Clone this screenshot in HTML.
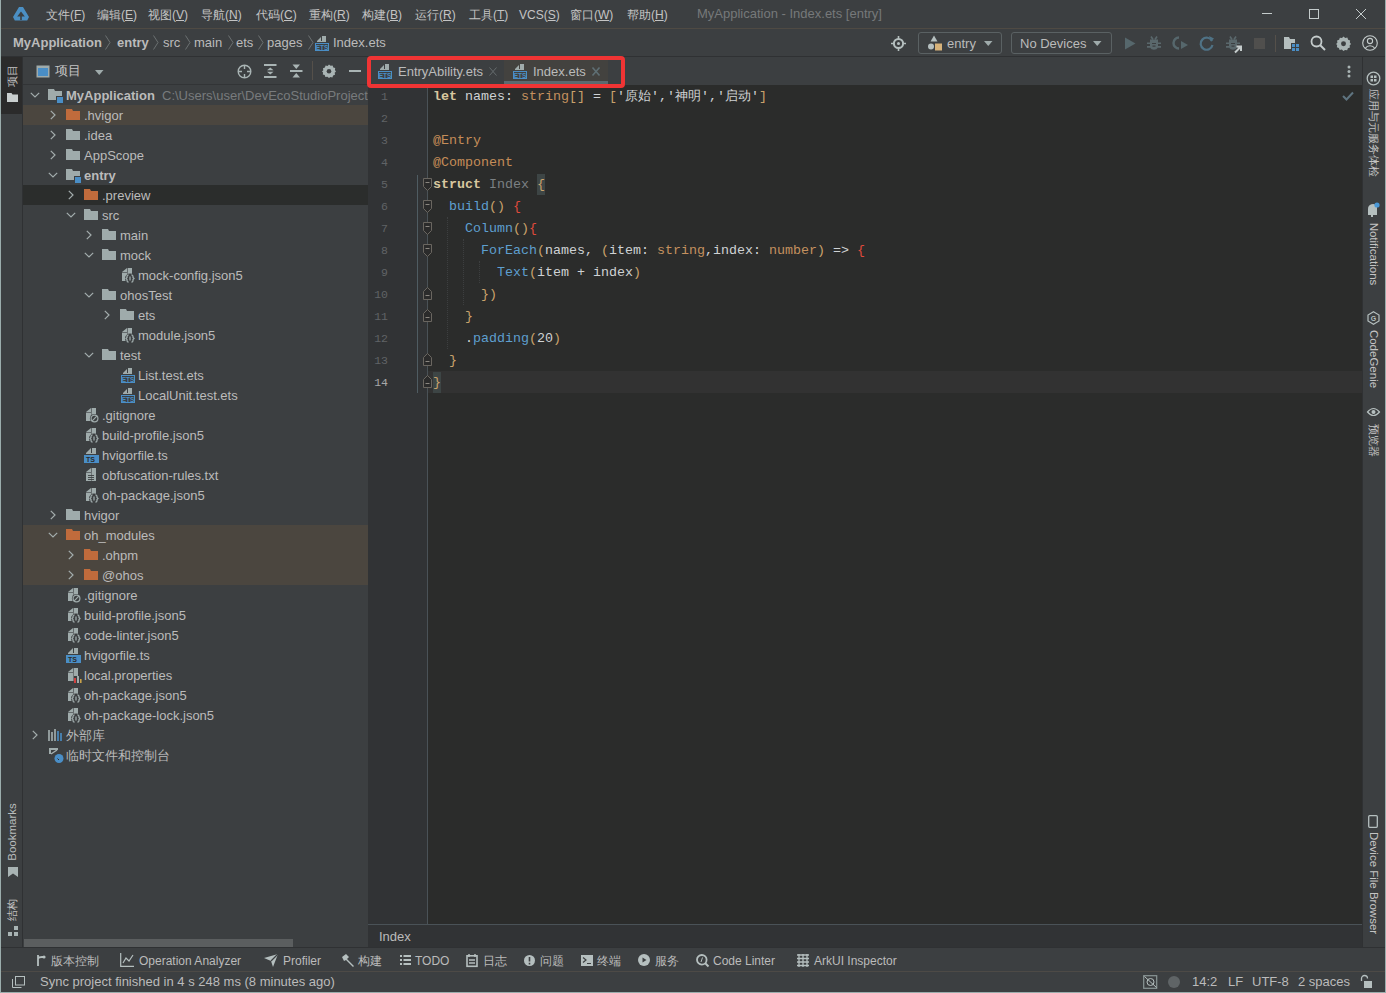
<!DOCTYPE html>
<html><head><meta charset="utf-8">
<style>
*{box-sizing:border-box;margin:0;padding:0}
html,body{width:1386px;height:993px;overflow:hidden;background:#3c3f41;font-family:"Liberation Sans",sans-serif;font-size:13px;color:#bbbbbb}
.a{position:absolute}
.t{position:absolute;white-space:nowrap;line-height:16px}
svg{position:absolute;overflow:visible}
#title{left:0;top:0;width:1386px;height:28px;background:#3c3f41}
#nav{left:0;top:29px;width:1386px;height:28px;background:#3c3f41}
.menu{top:7px;font-size:12px;color:#c4c4c4}
.bc{top:35px;color:#bbbbbb}
.chev{top:35px;width:6px;height:15px}
#lstrip{left:1px;top:57px;width:21px;height:891px;background:#3c3f41}
#proj{left:23px;top:57px;width:345px;height:891px;background:#3c3f41}
#editor{left:368px;top:85px;width:995px;height:839px;background:#2b2c2b}
#tabs{left:368px;top:57px;width:995px;height:28px;background:#3c3f41}
#rstrip{left:1363px;top:57px;width:22px;height:891px;background:#3c3f41}
#ebc{left:368px;top:924px;width:995px;height:24px;background:#313335}
#btool{left:0;top:948px;width:1386px;height:23px;background:#3c3f41}
#status{left:0;top:971px;width:1386px;height:22px;background:#3c3f41}
.row{position:absolute;left:23px;width:345px;height:20px}
.tr{top:2px}
.code{position:absolute;left:433px;margin-top:1px;font-family:"Liberation Mono",monospace;font-size:13.33px;line-height:22px;white-space:pre;color:#a9b7c6}
.ln{position:absolute;left:368px;width:20px;margin-top:1px;text-align:right;font-family:"Liberation Mono",monospace;font-size:11.5px;line-height:22px;color:#606366}
.code i{font-style:normal}
.code b{font-weight:bold}
.kw{color:#d8c79f}
.w{color:#cfd2d4}
.ty{color:#c4915f}
.br{color:#c9a26c}
.an{color:#c58d58}
.gy{color:#7b8083}
.fn{color:#5e9fcf}
.rd{color:#e04a3c}
.bt{top:953px;font-size:12px;color:#bbbbbb}
</style></head><body>
<svg width="0" height="0" style="position:absolute;left:0;top:0">
<defs>
<symbol id="chR" viewBox="0 0 6 10"><path d="M0.8 0.8L5 5L0.8 9.2" stroke="#a3adad" stroke-width="1.2" fill="none"/></symbol>
<symbol id="chD" viewBox="0 0 10 6"><path d="M0.8 0.8L5 5L9.2 0.8" stroke="#a3adad" stroke-width="1.2" fill="none"/></symbol>
<symbol id="i-folder" viewBox="0 0 16 16"><path d="M0 2h6l1 2h7v9H0z" fill="#9fabab"/></symbol>
<symbol id="i-folderO" viewBox="0 0 16 16"><path d="M0 2h6l1 2h7v9H0z" fill="#c06b3c"/></symbol>
<symbol id="i-module" viewBox="0 0 16 16"><path d="M0 2h6l1 2h7v5H8v4H0z" fill="#9fabab"/><rect x="9" y="10" width="6" height="6" fill="#4a8ec6"/></symbol>
<symbol id="i-paper" viewBox="0 0 16 16"><path d="M2 5L7 1V5Z" fill="#9fabab"/><rect x="7.6" y="1" width="4.4" height="13" fill="#9fabab"/><rect x="2" y="5.6" width="5.2" height="8.4" fill="#9fabab"/></symbol>
<symbol id="i-json" viewBox="0 0 16 16"><use href="#i-paper"/><circle cx="10" cy="11.5" r="5" fill="#3c3f41"/><path d="M8.6 7.8q-1.6 0.2-1.6 1.8v0.8l-1 1.1 1 1.1v0.8q0 1.6 1.6 1.8M11.4 7.8q1.6 0.2 1.6 1.8v0.8l1 1.1-1 1.1v0.8q0 1.6-1.6 1.8M10 9.5v4" stroke="#9fabab" stroke-width="1.3" fill="none"/></symbol>
<symbol id="i-git" viewBox="0 0 16 16"><use href="#i-paper"/><circle cx="10.5" cy="11.5" r="4.6" fill="#3c3f41"/><circle cx="10.5" cy="11.5" r="3.4" stroke="#9fabab" stroke-width="1.2" fill="none"/><path d="M8.2 13.8L12.8 9.2" stroke="#9fabab" stroke-width="1.2"/></symbol>
<symbol id="i-ets" viewBox="0 0 16 16"><path d="M3 6L7 2V6Z" fill="#9fabab"/><path d="M8 1h4v6H3v-1h5z" fill="#9fabab"/><rect x="1.5" y="8.5" width="13" height="7" fill="none" stroke="#4a8ec6" stroke-width="1"/><text x="8" y="14.6" font-family="Liberation Sans" font-size="6.5" font-weight="bold" fill="#4a8ec6" text-anchor="middle">ETS</text></symbol>
<symbol id="i-ts" viewBox="0 0 16 16"><path d="M2 6L7 1V6Z" fill="#9fabab"/><path d="M8 1h4v6H2v-1h6z" fill="#9fabab"/><rect x="0" y="8" width="15" height="8" fill="#4a8ec6"/><text x="2" y="14.8" font-family="Liberation Sans" font-size="7" font-weight="bold" fill="#2b2b2b">TS</text></symbol>
<symbol id="i-txt" viewBox="0 0 16 16"><use href="#i-paper"/><path d="M4 8.5h6M4 10.5h6M4 12.5h6" stroke="#3c3f41" stroke-width="0.9"/></symbol>
<symbol id="i-props" viewBox="0 0 16 16"><use href="#i-paper"/><rect x="8" y="9" width="8" height="7" fill="#3c3f41"/><rect x="8" y="11" width="2" height="5" fill="#d04040"/><rect x="11" y="9" width="2" height="7" fill="#9fabab"/><rect x="14" y="12" width="1.6" height="4" fill="#c9a14a"/></symbol>
<symbol id="i-lib" viewBox="0 0 16 16"><path d="M1 3v11M4 5v9M7 2v12" stroke="#a6b1b1" stroke-width="1.6"/><path d="M10 4v10M13 6v8" stroke="#4a8ec6" stroke-width="1.6"/></symbol>
<symbol id="i-scratch" viewBox="0 0 16 16"><path d="M1 1h9v2H3v4H1z" fill="#9fabab"/><path d="M3 7L9 3" stroke="#a6b1b1" stroke-width="1.3"/><circle cx="11" cy="11.5" r="4.5" fill="#4a8ec6"/><path d="M9.5 11.5l1.5 1.5" stroke="#2b2b2b" stroke-width="1"/></symbol>
<symbol id="foldO" viewBox="0 0 9 13"><path d="M0.5 0.5h8v8l-4 4l-4-4z" fill="#2b2b2b" stroke="#6a6660" stroke-width="1"/><path d="M2.5 4.5h4" stroke="#8a8680"/></symbol>
<symbol id="foldC" viewBox="0 0 9 13"><path d="M0.5 12.5h8v-8l-4-4l-4 4z" fill="#2b2b2b" stroke="#6a6660" stroke-width="1"/><path d="M2.5 8.5h4" stroke="#8a8680"/></symbol>
<symbol id="gear" viewBox="0 0 14 14"><path d="M7 0.5l1.6 1.3 2-0.3 0.7 1.9 1.9 0.7-0.3 2L14 7.5l-1.3 1.3 0.3 2-1.9 0.7-0.7 1.9-2-0.3L7 14l-1.6-1.3-2 0.3-0.7-1.9-1.9-0.7 0.3-2L0 7.5l1.3-1.3-0.3-2 1.9-0.7 0.7-1.9 2 0.3z" fill="#a9b4b4"/><circle cx="7" cy="7.2" r="2.3" fill="#3c3f41"/></symbol>
</defs></svg>

<!-- title bar -->
<div id="title" class="a"></div>
<div class="a" style="left:1px;top:28px;width:1384px;height:1px;background:#4f4a43"></div>
<svg style="left:12px;top:6px" width="18" height="16" viewBox="0 0 18 16"><path fill-rule="evenodd" d="M7 1H11L17 11L15.2 14.6H2.8L1 11Z M9 5.5L12.8 10.6H9.8V15H8.2V10.6H5.2Z" fill="#4b8fc3"/></svg>
<span class="t menu" style="left:46px">文件(<u>F</u>)</span>
<span class="t menu" style="left:97px">编辑(<u>E</u>)</span>
<span class="t menu" style="left:148px">视图(<u>V</u>)</span>
<span class="t menu" style="left:201px">导航(<u>N</u>)</span>
<span class="t menu" style="left:256px">代码(<u>C</u>)</span>
<span class="t menu" style="left:309px">重构(<u>R</u>)</span>
<span class="t menu" style="left:362px">构建(<u>B</u>)</span>
<span class="t menu" style="left:415px">运行(<u>R</u>)</span>
<span class="t menu" style="left:469px">工具(<u>T</u>)</span>
<span class="t menu" style="left:519px">VCS(<u>S</u>)</span>
<span class="t menu" style="left:570px">窗口(<u>W</u>)</span>
<span class="t menu" style="left:627px">帮助(<u>H</u>)</span>
<span class="t" style="left:697px;top:6px;color:#76797a">MyApplication - Index.ets [entry]</span>
<div class="a" style="left:1262px;top:13px;width:10px;height:1px;background:#c5cccc"></div>
<div class="a" style="left:1309px;top:9px;width:10px;height:10px;border:1px solid #c5cccc"></div>
<svg style="left:1356px;top:9px" width="10" height="10"><path d="M0 0L10 10M10 0L0 10" stroke="#c5cccc" stroke-width="1"/></svg>

<!-- nav bar -->
<div id="nav" class="a"></div>
<div class="a" style="left:1px;top:56px;width:1384px;height:1px;background:#2f3133"></div>
<span class="t bc" style="left:13px;font-weight:bold">MyApplication</span>
<svg style="left:105px;top:35px" width="6" height="15"><path d="M0.5 0.5L5 7.5L0.5 14.5" stroke="#6b7071" fill="none"/></svg>
<span class="t bc" style="left:117px;font-weight:bold">entry</span>
<svg style="left:153px;top:35px" width="6" height="15"><path d="M0.5 0.5L5 7.5L0.5 14.5" stroke="#6b7071" fill="none"/></svg>
<span class="t bc" style="left:163px">src</span>
<svg style="left:185px;top:35px" width="6" height="15"><path d="M0.5 0.5L5 7.5L0.5 14.5" stroke="#6b7071" fill="none"/></svg>
<span class="t bc" style="left:194px">main</span>
<svg style="left:228px;top:35px" width="6" height="15"><path d="M0.5 0.5L5 7.5L0.5 14.5" stroke="#6b7071" fill="none"/></svg>
<span class="t bc" style="left:236px">ets</span>
<svg style="left:258px;top:35px" width="6" height="15"><path d="M0.5 0.5L5 7.5L0.5 14.5" stroke="#6b7071" fill="none"/></svg>
<span class="t bc" style="left:267px">pages</span>
<svg style="left:308px;top:35px" width="6" height="15"><path d="M0.5 0.5L5 7.5L0.5 14.5" stroke="#6b7071" fill="none"/></svg>
<span class="t bc" style="left:333px">Index.ets</span>

<!-- left strip -->
<div id="lstrip" class="a"></div>
<div class="a" style="left:1px;top:57px;width:21px;height:57px;background:#2b2b2b"></div>
<div class="a" style="left:22px;top:57px;width:1px;height:891px;background:#2f3133"></div>

<!-- project panel -->
<div id="proj" class="a"></div>
<div class="a" style="left:23px;top:84px;width:345px;height:1px;background:#323436"></div>
<!--TREE-->
<div class="a" style="left:23px;top:105px;width:345px;height:20px;background:#4b463f"></div>
<div class="a" style="left:23px;top:185px;width:345px;height:20px;background:#2b2d2c"></div>
<div class="a" style="left:23px;top:525px;width:345px;height:20px;background:#4b463f"></div>
<div class="a" style="left:23px;top:545px;width:345px;height:20px;background:#4b463f"></div>
<div class="a" style="left:23px;top:565px;width:345px;height:20px;background:#4b463f"></div>
<svg class="chD" style="left:30px;top:92px" width="10" height="6"><use href="#chD"/></svg>
<svg style="left:48px;top:87px" width="16" height="16"><use href="#i-module"/></svg>
<span class="t" style="left:66px;top:88px;font-weight:bold;">MyApplication</span>
<span class="t" style="left:162px;top:88px;color:#787b7d;width:206px;overflow:hidden">C:\Users\user\DevEcoStudioProjects\MyApplication</span>
<svg class="chR" style="left:50px;top:110px" width="6" height="10"><use href="#chR"/></svg>
<svg style="left:66px;top:107px" width="16" height="16"><use href="#i-folderO"/></svg>
<span class="t" style="left:84px;top:108px;">.hvigor</span>
<svg class="chR" style="left:50px;top:130px" width="6" height="10"><use href="#chR"/></svg>
<svg style="left:66px;top:127px" width="16" height="16"><use href="#i-folder"/></svg>
<span class="t" style="left:84px;top:128px;">.idea</span>
<svg class="chR" style="left:50px;top:150px" width="6" height="10"><use href="#chR"/></svg>
<svg style="left:66px;top:147px" width="16" height="16"><use href="#i-folder"/></svg>
<span class="t" style="left:84px;top:148px;">AppScope</span>
<svg class="chD" style="left:48px;top:172px" width="10" height="6"><use href="#chD"/></svg>
<svg style="left:66px;top:167px" width="16" height="16"><use href="#i-module"/></svg>
<span class="t" style="left:84px;top:168px;font-weight:bold;">entry</span>
<svg class="chR" style="left:68px;top:190px" width="6" height="10"><use href="#chR"/></svg>
<svg style="left:84px;top:187px" width="16" height="16"><use href="#i-folderO"/></svg>
<span class="t" style="left:102px;top:188px;">.preview</span>
<svg class="chD" style="left:66px;top:212px" width="10" height="6"><use href="#chD"/></svg>
<svg style="left:84px;top:207px" width="16" height="16"><use href="#i-folder"/></svg>
<span class="t" style="left:102px;top:208px;">src</span>
<svg class="chR" style="left:86px;top:230px" width="6" height="10"><use href="#chR"/></svg>
<svg style="left:102px;top:227px" width="16" height="16"><use href="#i-folder"/></svg>
<span class="t" style="left:120px;top:228px;">main</span>
<svg class="chD" style="left:84px;top:252px" width="10" height="6"><use href="#chD"/></svg>
<svg style="left:102px;top:247px" width="16" height="16"><use href="#i-folder"/></svg>
<span class="t" style="left:120px;top:248px;">mock</span>
<svg style="left:120px;top:267px" width="16" height="16"><use href="#i-json"/></svg>
<span class="t" style="left:138px;top:268px;">mock-config.json5</span>
<svg class="chD" style="left:84px;top:292px" width="10" height="6"><use href="#chD"/></svg>
<svg style="left:102px;top:287px" width="16" height="16"><use href="#i-folder"/></svg>
<span class="t" style="left:120px;top:288px;">ohosTest</span>
<svg class="chR" style="left:104px;top:310px" width="6" height="10"><use href="#chR"/></svg>
<svg style="left:120px;top:307px" width="16" height="16"><use href="#i-folder"/></svg>
<span class="t" style="left:138px;top:308px;">ets</span>
<svg style="left:120px;top:327px" width="16" height="16"><use href="#i-json"/></svg>
<span class="t" style="left:138px;top:328px;">module.json5</span>
<svg class="chD" style="left:84px;top:352px" width="10" height="6"><use href="#chD"/></svg>
<svg style="left:102px;top:347px" width="16" height="16"><use href="#i-folder"/></svg>
<span class="t" style="left:120px;top:348px;">test</span>
<svg style="left:120px;top:367px" width="16" height="16"><use href="#i-ets"/></svg>
<span class="t" style="left:138px;top:368px;">List.test.ets</span>
<svg style="left:120px;top:387px" width="16" height="16"><use href="#i-ets"/></svg>
<span class="t" style="left:138px;top:388px;">LocalUnit.test.ets</span>
<svg style="left:84px;top:407px" width="16" height="16"><use href="#i-git"/></svg>
<span class="t" style="left:102px;top:408px;">.gitignore</span>
<svg style="left:84px;top:427px" width="16" height="16"><use href="#i-json"/></svg>
<span class="t" style="left:102px;top:428px;">build-profile.json5</span>
<svg style="left:84px;top:447px" width="16" height="16"><use href="#i-ts"/></svg>
<span class="t" style="left:102px;top:448px;">hvigorfile.ts</span>
<svg style="left:84px;top:467px" width="16" height="16"><use href="#i-txt"/></svg>
<span class="t" style="left:102px;top:468px;">obfuscation-rules.txt</span>
<svg style="left:84px;top:487px" width="16" height="16"><use href="#i-json"/></svg>
<span class="t" style="left:102px;top:488px;">oh-package.json5</span>
<svg class="chR" style="left:50px;top:510px" width="6" height="10"><use href="#chR"/></svg>
<svg style="left:66px;top:507px" width="16" height="16"><use href="#i-folder"/></svg>
<span class="t" style="left:84px;top:508px;">hvigor</span>
<svg class="chD" style="left:48px;top:532px" width="10" height="6"><use href="#chD"/></svg>
<svg style="left:66px;top:527px" width="16" height="16"><use href="#i-folderO"/></svg>
<span class="t" style="left:84px;top:528px;">oh_modules</span>
<svg class="chR" style="left:68px;top:550px" width="6" height="10"><use href="#chR"/></svg>
<svg style="left:84px;top:547px" width="16" height="16"><use href="#i-folderO"/></svg>
<span class="t" style="left:102px;top:548px;">.ohpm</span>
<svg class="chR" style="left:68px;top:570px" width="6" height="10"><use href="#chR"/></svg>
<svg style="left:84px;top:567px" width="16" height="16"><use href="#i-folderO"/></svg>
<span class="t" style="left:102px;top:568px;">@ohos</span>
<svg style="left:66px;top:587px" width="16" height="16"><use href="#i-git"/></svg>
<span class="t" style="left:84px;top:588px;">.gitignore</span>
<svg style="left:66px;top:607px" width="16" height="16"><use href="#i-json"/></svg>
<span class="t" style="left:84px;top:608px;">build-profile.json5</span>
<svg style="left:66px;top:627px" width="16" height="16"><use href="#i-json"/></svg>
<span class="t" style="left:84px;top:628px;">code-linter.json5</span>
<svg style="left:66px;top:647px" width="16" height="16"><use href="#i-ts"/></svg>
<span class="t" style="left:84px;top:648px;">hvigorfile.ts</span>
<svg style="left:66px;top:667px" width="16" height="16"><use href="#i-props"/></svg>
<span class="t" style="left:84px;top:668px;">local.properties</span>
<svg style="left:66px;top:687px" width="16" height="16"><use href="#i-json"/></svg>
<span class="t" style="left:84px;top:688px;">oh-package.json5</span>
<svg style="left:66px;top:707px" width="16" height="16"><use href="#i-json"/></svg>
<span class="t" style="left:84px;top:708px;">oh-package-lock.json5</span>
<svg class="chR" style="left:32px;top:730px" width="6" height="10"><use href="#chR"/></svg>
<svg style="left:48px;top:727px" width="16" height="16"><use href="#i-lib"/></svg>
<span class="t" style="left:66px;top:728px;">外部库</span>
<svg style="left:48px;top:747px" width="16" height="16"><use href="#i-scratch"/></svg>
<span class="t" style="left:66px;top:748px;">临时文件和控制台</span>

<!--/TREE-->
<div class="a" style="left:24px;top:939px;width:269px;height:8px;background:#5b5e5f"></div>

<!-- editor -->
<div id="tabs" class="a"></div>
<div id="editor" class="a"></div>
<div id="ebc" class="a"></div>
<div class="a" style="left:368px;top:924px;width:995px;height:1px;background:#4a5257"></div>
<div class="a" style="left:368px;top:85px;width:59px;height:839px;background:#313335"></div>
<div class="a" style="left:427px;top:85px;width:1px;height:839px;background:#4a5257"></div>
<span class="t" style="left:379px;top:929px">Index</span>
<!--EDITOR-->
<div class="a" style="left:428px;top:371px;width:935px;height:22px;background:#323232"></div>
<div class="a" style="left:417px;top:175px;width:1px;height:218px;background:#4f5c62"></div>
<div class="a" style="left:447px;top:217px;width:0;height:132px;border-left:1px dotted #3d3f40"></div>
<div class="a" style="left:463px;top:239px;width:0;height:66px;border-left:1px dotted #3d3f40"></div>
<div class="a" style="left:479px;top:261px;width:0;height:22px;border-left:1px dotted #3d3f40"></div>
<div class="a" style="left:537px;top:174px;width:8px;height:21px;background:#3d4545"></div>
<div class="a" style="left:433px;top:372px;width:8px;height:21px;background:#3d4545"></div>
<div class="ln" style="top:85px">1</div>
<div class="ln" style="top:107px">2</div>
<div class="ln" style="top:129px">3</div>
<div class="ln" style="top:151px">4</div>
<div class="ln" style="top:173px">5</div>
<div class="ln" style="top:195px">6</div>
<div class="ln" style="top:217px">7</div>
<div class="ln" style="top:239px">8</div>
<div class="ln" style="top:261px">9</div>
<div class="ln" style="top:283px">10</div>
<div class="ln" style="top:305px">11</div>
<div class="ln" style="top:327px">12</div>
<div class="ln" style="top:349px">13</div>
<div class="ln" style="top:371px;color:#a8a8a8">14</div>
<svg style="left:423px;top:178px" width="9" height="13"><use href="#foldO"/></svg>
<svg style="left:423px;top:200px" width="9" height="13"><use href="#foldO"/></svg>
<svg style="left:423px;top:222px" width="9" height="13"><use href="#foldO"/></svg>
<svg style="left:423px;top:244px" width="9" height="13"><use href="#foldO"/></svg>
<svg style="left:423px;top:287px" width="9" height="13"><use href="#foldC"/></svg>
<svg style="left:423px;top:309px" width="9" height="13"><use href="#foldC"/></svg>
<svg style="left:423px;top:353px" width="9" height="13"><use href="#foldC"/></svg>
<svg style="left:423px;top:375px" width="9" height="13"><use href="#foldC"/></svg>
<div class="code" style="top:85px"><b class="kw">let</b> <i class="w">names</i><i class="w">:</i> <i class="ty">string</i><i class="br">[]</i> <i class="w">=</i> <i class="br">[</i><i class="w">'原始'</i><i class="w">,</i><i class="w">'神明'</i><i class="w">,</i><i class="w">'启动'</i><i class="br">]</i></div>
<div class="code" style="top:129px"><i class="an">@Entry</i></div>
<div class="code" style="top:151px"><i class="an">@Component</i></div>
<div class="code" style="top:173px"><b class="kw">struct</b> <i class="gy">Index</i> <i class="br">{</i></div>
<div class="code" style="top:195px">  <i class="fn">build</i><i class="br">()</i> <i class="rd">{</i></div>
<div class="code" style="top:217px">    <i class="fn">Column</i><i class="br">()</i><i class="rd">{</i></div>
<div class="code" style="top:239px">      <i class="fn">ForEach</i><i class="br">(</i><i class="w">names, </i><i class="br">(</i><i class="w">item: </i><i class="ty">string</i><i class="w">,index: </i><i class="ty">number</i><i class="br">)</i><i class="w"> => </i><i class="rd">{</i></div>
<div class="code" style="top:261px">        <i class="fn">Text</i><i class="br">(</i><i class="w">item + index</i><i class="br">)</i></div>
<div class="code" style="top:283px">      <i class="br">})</i></div>
<div class="code" style="top:305px">    <i class="br">}</i></div>
<div class="code" style="top:327px">    <i class="w">.</i><i class="fn">padding</i><i class="br">(</i><i class="w">20</i><i class="br">)</i></div>
<div class="code" style="top:349px">  <i class="br">}</i></div>
<div class="code" style="top:371px"><i class="br">}</i></div>
<svg style="left:1342px;top:91px" width="12" height="10"><path d="M1 5L4.5 8.5L11 1.5" stroke="#5f7480" stroke-width="2" fill="none"/></svg>
<!--/EDITOR-->

<!-- right strip -->
<div id="rstrip" class="a"></div>
<div class="a" style="left:1362px;top:57px;width:1px;height:891px;background:#2f3133"></div>

<!-- bottom toolbar -->
<div id="btool" class="a"></div>
<div class="a" style="left:1px;top:947px;width:1384px;height:1px;background:#2f3133"></div>
<div id="status" class="a"></div>
<div class="a" style="left:1px;top:971px;width:1384px;height:1px;background:#4d4a46"></div>
<span class="t" style="left:40px;top:974px">Sync project finished in 4 s 248 ms (8 minutes ago)</span>

<!--HEADER-->
<svg style="left:36px;top:65px" width="14" height="13"><rect x="0.5" y="0.5" width="13" height="12" fill="#9fabab"/><rect x="2" y="3" width="10" height="8" fill="#4a8ec6"/></svg>
<span class="t" style="left:55px;top:63px;font-size:12.5px;color:#c4c4c4">项目</span>
<svg style="left:95px;top:70px" width="9" height="5"><path d="M0 0h8.5L4.25 5z" fill="#9fabab"/></svg>
<svg style="left:237px;top:64px" width="15" height="15"><circle cx="7.5" cy="7.5" r="6.3" stroke="#a9b4b4" stroke-width="1.4" fill="none"/><path d="M7.5 1v4M7.5 10v4M1 7.5h4M10 7.5h4" stroke="#a9b4b4" stroke-width="1.4"/></svg>
<svg style="left:264px;top:64px" width="13" height="14"><path d="M0 1h12.5M0 13h12.5" stroke="#a9b4b4" stroke-width="2"/><path d="M6.25 3.5L9.5 6.2H3z M6.25 10.5L9.5 7.8H3z" fill="#a9b4b4"/></svg>
<svg style="left:290px;top:64px" width="13" height="14"><path d="M0 7h12.5" stroke="#a9b4b4" stroke-width="2"/><path d="M6.25 5L10 0.5H2.5z M6.25 9L10 13.5H2.5z" fill="#a9b4b4"/></svg>
<div class="a" style="left:312px;top:61px;width:1px;height:19px;background:#55504a"></div>
<svg style="left:322px;top:64px" width="14" height="14"><use href="#gear"/></svg>
<div class="a" style="left:349px;top:70px;width:12px;height:2px;background:#a9b4b4"></div>
<!-- tabs -->
<svg style="left:377px;top:63px" width="16" height="16"><use href="#i-ets"/></svg>
<span class="t" style="left:398px;top:64px">EntryAbility.ets</span>
<svg style="left:489px;top:67px" width="8" height="9"><path d="M0.5 0.5l7 8M7.5 0.5l-7 8" stroke="#656b6d" stroke-width="1"/></svg>
<div class="a" style="left:504px;top:60px;width:104px;height:24px;background:#43423f"></div>
<div class="a" style="left:504px;top:81px;width:104px;height:3px;background:#5b6a70"></div>
<svg style="left:512px;top:63px" width="16" height="16"><use href="#i-ets"/></svg>
<span class="t" style="left:533px;top:64px">Index.ets</span>
<svg style="left:592px;top:67px" width="8" height="9"><path d="M0.5 0.5l7 8M7.5 0.5l-7 8" stroke="#5f6f74" stroke-width="1.6"/></svg>
<svg style="left:1347px;top:65px" width="4" height="13"><circle cx="2" cy="2" r="1.5" fill="#a9b4b4"/><circle cx="2" cy="6.5" r="1.5" fill="#a9b4b4"/><circle cx="2" cy="11" r="1.5" fill="#a9b4b4"/></svg>
<!-- nav icon before Index.ets -->
<svg style="left:314px;top:35px" width="16" height="16"><use href="#i-ets"/></svg>
<!-- toolbar right -->
<svg style="left:891px;top:36px" width="15" height="15"><circle cx="7.5" cy="7.5" r="4.6" stroke="#b5bfbf" stroke-width="2" fill="none"/><circle cx="7.5" cy="7.5" r="1.5" fill="#b5bfbf"/><path d="M7.5 0v3M7.5 12v3M0 7.5h3M12 7.5h3" stroke="#b5bfbf" stroke-width="1.6"/></svg>
<div class="a" style="left:918px;top:32px;width:84px;height:22px;border:1px solid #5a6163;border-radius:3px"></div>
<svg style="left:927px;top:35px" width="16" height="16"><path d="M7 0.5L10.5 6.5H3.5z" fill="#b5bfbf"/><circle cx="4" cy="11.5" r="3" fill="#b5bfbf"/><rect x="8" y="8.5" width="7" height="7" fill="#d6b27a"/></svg>
<span class="t" style="left:947px;top:36px">entry</span>
<svg style="left:984px;top:41px" width="9" height="5"><path d="M0 0h8.5L4.25 5z" fill="#9fabab"/></svg>
<div class="a" style="left:1011px;top:32px;width:101px;height:22px;border:1px solid #5a6163;border-radius:3px"></div>
<span class="t" style="left:1020px;top:36px">No Devices</span>
<svg style="left:1093px;top:41px" width="9" height="5"><path d="M0 0h8.5L4.25 5z" fill="#9fabab"/></svg>
<svg style="left:1124px;top:37px" width="12" height="13"><path d="M1 0.5L11.5 6.5L1 12.5z" fill="#56676c"/></svg>
<svg style="left:1147px;top:36px" width="15" height="15"><path d="M4 0.5L6 3.5M10 0.5L8 3.5" stroke="#5a686c" stroke-width="1.6"/><path d="M3 3.5h8v3h3v1.6h-3v2h3v1.6h-3.2A4 3 0 0 1 3.2 11.7H0v-1.6h3v-2H0V6.5h3z" fill="#5a686c"/><path d="M5 7.5h4M5.5 10.2h3" stroke="#3c3f41" stroke-width="1.2"/></svg>
<svg style="left:1173px;top:35px" width="16" height="16"><path d="M6 2.5A5.5 5.5 0 1 0 6 13.5" stroke="#56676c" stroke-width="2.5" fill="none"/><path d="M8 6l7 4-7 4z" fill="#56676c"/></svg>
<svg style="left:1199px;top:35px" width="16" height="16"><path d="M13 6A6 6 0 1 0 13.5 10" stroke="#4f7285" stroke-width="2.2" fill="none"/><path d="M10 1l5 2.5-3 3z" fill="#4f7285"/></svg>
<svg style="left:1226px;top:36px" width="18" height="18"><path d="M4 0.5L6 3.5M10 0.5L8 3.5" stroke="#5a686c" stroke-width="1.6"/><path d="M3 3.5h8v3h3v1.6h-3v2h3v1.6h-3.2A4 3 0 0 1 3.2 11.7H0v-1.6h3v-2H0V6.5h3z" fill="#5a686c"/><path d="M5 7.5h4M5.5 10.2h3" stroke="#3c3f41" stroke-width="1.2"/><path d="M9 16.5l5.5-5.5M10.5 10.5h4.5v4.5" stroke="#c5cccc" stroke-width="2" fill="none"/></svg>
<div class="a" style="left:1254px;top:38px;width:11px;height:11px;background:#504f4d"></div>
<div class="a" style="left:1275px;top:35px;width:1px;height:17px;background:#55504a"></div>
<svg style="left:1284px;top:36px" width="16" height="16"><path d="M0 1h5l1 2h5v4H7v6H0z" fill="#b5bfbf"/><rect x="8" y="8" width="3" height="3" fill="#4a8ec6"/><rect x="12" y="8" width="3" height="3" fill="#4a8ec6"/><rect x="8" y="12" width="3" height="3" fill="#4a8ec6"/><rect x="12" y="12" width="3" height="3" fill="#4a8ec6"/></svg>
<svg style="left:1310px;top:35px" width="16" height="16"><circle cx="6.5" cy="6.5" r="5" stroke="#c5cccc" stroke-width="1.8" fill="none"/><path d="M10 10l5 5" stroke="#c5cccc" stroke-width="2"/></svg>
<svg style="left:1336px;top:36px" width="15" height="15"><use href="#gear"/></svg>
<svg style="left:1362px;top:35px" width="16" height="16"><circle cx="8" cy="8" r="7.3" stroke="#c5cccc" stroke-width="1.1" fill="none"/><circle cx="8" cy="6" r="2.6" stroke="#c5cccc" stroke-width="1.1" fill="none"/><path d="M3.5 13a5 4 0 0 1 9 0" stroke="#c5cccc" stroke-width="1.1" fill="none"/></svg>
<!--/HEADER-->
<!--STRIPS-->
<!-- left strip -->
<span class="t" style="left:0px;top:70px;width:24px;text-align:center;font-size:11px;line-height:12px;color:#c4c4c4;transform:rotate(-90deg);transform-origin:center">项目</span>
<svg style="left:7px;top:93px" width="11" height="9"><path d="M0 0h4.5l1 1.5H11V9H0z" fill="#c9cfcf"/></svg>
<span class="t" style="left:-18px;top:826px;width:60px;text-align:center;font-size:11.5px;line-height:12px;color:#b8bcbc;transform:rotate(-90deg);transform-origin:center">Bookmarks</span>
<svg style="left:8px;top:867px" width="10" height="10"><path d="M0 0h10v10L5 6.5L0 10z" fill="#a9b4b4"/></svg>
<span class="t" style="left:0px;top:904px;width:24px;text-align:center;font-size:11px;line-height:12px;color:#c4c4c4;transform:rotate(-90deg);transform-origin:center">结构</span>
<svg style="left:8px;top:926px" width="10" height="10"><rect x="0" y="6" width="4" height="4" fill="#a9b4b4"/><rect x="6" y="6" width="4" height="4" fill="#a9b4b4"/><rect x="6" y="0" width="4" height="4" fill="#a9b4b4"/></svg>
<!-- right strip -->
<svg style="left:1366px;top:71px" width="15" height="15"><circle cx="7.5" cy="7.5" r="6.3" stroke="#b5bfbf" stroke-width="1.3" fill="none"/><rect x="4.5" y="4.5" width="2.5" height="2.5" fill="#b5bfbf"/><rect x="8" y="4.5" width="2.5" height="2.5" fill="#b5bfbf"/><rect x="4.5" y="8" width="2.5" height="2.5" fill="#b5bfbf"/><rect x="8" y="8" width="2.5" height="2.5" fill="#b5bfbf"/></svg>
<span class="t" style="left:1329px;top:127px;width:90px;text-align:center;font-size:11px;line-height:12px;color:#c4c4c4;transform:rotate(90deg);transform-origin:center">应用与元服务体检</span>
<svg style="left:1366px;top:202px" width="14" height="15"><path d="M2 13V7a5 5 0 0 1 9 -3v9z" fill="#b5bfbf"/><rect x="5" y="13" width="2" height="2" fill="#b5bfbf"/><circle cx="11" cy="3" r="2.6" fill="#4a98d6"/></svg>
<span class="t" style="left:1341px;top:248px;width:66px;text-align:center;font-size:11.5px;line-height:12px;color:#c4c4c4;transform:rotate(90deg);transform-origin:center">Notifications</span>
<svg style="left:1367px;top:311px" width="13" height="14"><path d="M6.5 0.8L12 4v6l-5.5 3.2L1 10V4z" stroke="#b5bfbf" stroke-width="1.2" fill="none"/><text x="6.5" y="9.7" font-family="Liberation Sans" font-size="7" font-weight="bold" fill="#b5bfbf" text-anchor="middle">G</text></svg>
<span class="t" style="left:1344px;top:353px;width:60px;text-align:center;font-size:11.5px;line-height:12px;color:#c4c4c4;transform:rotate(90deg);transform-origin:center">CodeGenie</span>
<svg style="left:1367px;top:407px" width="13" height="10"><path d="M0.5 5Q6.5 -2 12.5 5Q6.5 12 0.5 5z" stroke="#b5bfbf" stroke-width="1.2" fill="none"/><circle cx="6.5" cy="5" r="2" fill="#b5bfbf"/></svg>
<span class="t" style="left:1349px;top:434px;width:50px;text-align:center;font-size:11px;line-height:12px;color:#c4c4c4;transform:rotate(90deg);transform-origin:center">预览器</span>
<svg style="left:1368px;top:815px" width="10" height="13"><rect x="0.7" y="0.7" width="8.6" height="11.6" rx="1" stroke="#b5bfbf" stroke-width="1.3" fill="none"/></svg>
<span class="t" style="left:1322px;top:877px;width:104px;text-align:center;font-size:11.5px;line-height:12px;color:#c4c4c4;transform:rotate(90deg);transform-origin:center">Device File Browser</span>
<!-- bottom toolbar -->
<svg style="left:36px;top:954px" width="10" height="13"><path d="M2 1v11M2 5c0-2 2-2 4-2h2" stroke="#b5bfbf" stroke-width="1.8" fill="none"/><circle cx="8" cy="3" r="1.6" fill="#b5bfbf"/></svg>
<span class="t bt" style="left:51px">版本控制</span>
<svg style="left:120px;top:953px" width="14" height="14"><path d="M0.7 0v13.3H14" stroke="#b5bfbf" stroke-width="1.2" fill="none"/><path d="M3 10l3-5 3 3 4-6" stroke="#b5bfbf" stroke-width="1.2" fill="none"/></svg>
<span class="t bt" style="left:139px">Operation Analyzer</span>
<svg style="left:264px;top:954px" width="14" height="13"><path d="M0 4L14 0L9 13L7 7z" fill="#b5bfbf"/><path d="M7 7L14 0" stroke="#3c3f41" stroke-width="1.2"/></svg>
<span class="t bt" style="left:283px">Profiler</span>
<svg style="left:341px;top:954px" width="13" height="13"><path d="M1 3L5 0L8 3L6 5L13 12L12 13L5 6L3 7z" fill="#b5bfbf"/></svg>
<span class="t bt" style="left:358px">构建</span>
<svg style="left:400px;top:955px" width="11" height="10"><path d="M0 1h2M0 5h2M0 9h2M3.5 1h7.5M3.5 5h7.5M3.5 9h7.5" stroke="#b5bfbf" stroke-width="1.8"/></svg>
<span class="t bt" style="left:415px">TODO</span>
<svg style="left:466px;top:954px" width="12" height="13"><rect x="1" y="1.8" width="10" height="10.5" stroke="#b5bfbf" stroke-width="1.6" fill="none"/><path d="M3 0v3M9 0v3M3 6h6M3 9h6" stroke="#b5bfbf" stroke-width="1.5"/></svg>
<span class="t bt" style="left:483px">日志</span>
<svg style="left:524px;top:955px" width="11" height="11"><circle cx="5.5" cy="5.5" r="5.5" fill="#b5bfbf"/><path d="M5.5 2v4.5M5.5 7.8v1.6" stroke="#3c3f41" stroke-width="1.6"/></svg>
<span class="t bt" style="left:540px">问题</span>
<svg style="left:581px;top:955px" width="12" height="11"><rect x="0" y="0" width="12" height="11" fill="#b5bfbf"/><path d="M2 2.5l3 2.5-3 2.5M6 8.5h4" stroke="#3c3f41" stroke-width="1.2" fill="none"/></svg>
<span class="t bt" style="left:597px">终端</span>
<svg style="left:638px;top:954px" width="12" height="12"><circle cx="6" cy="6" r="6" fill="#b5bfbf"/><path d="M4.5 3.5L8.5 6L4.5 8.5z" fill="#3c3f41"/></svg>
<span class="t bt" style="left:655px">服务</span>
<svg style="left:696px;top:954px" width="13" height="13"><circle cx="5.8" cy="5.8" r="4.8" stroke="#b5bfbf" stroke-width="1.8" fill="none"/><path d="M9 9l3.5 3.5" stroke="#b5bfbf" stroke-width="2"/><path d="M6.5 3.5l-1.5 4.5" stroke="#b5bfbf" stroke-width="1"/></svg>
<span class="t bt" style="left:713px">Code Linter</span>
<svg style="left:797px;top:954px" width="12" height="13"><path d="M0 1h12M0 4.5h12M0 8h12M0 11.5h12M2 0v13M6 0v13M10 0v13" stroke="#b5bfbf" stroke-width="1.3"/></svg>
<span class="t bt" style="left:814px">ArkUI Inspector</span>
<!-- status bar -->
<svg style="left:12px;top:976px" width="13" height="12"><rect x="3.5" y="0.5" width="9" height="8.5" stroke="#b5bfbf" fill="none"/><path d="M0.5 3v8.5h9" stroke="#b5bfbf" fill="none"/></svg>
<svg style="left:1143px;top:975px" width="15" height="14"><rect x="0.7" y="0.7" width="13" height="12.6" stroke="#8a9696" stroke-width="1.2" fill="none"/><circle cx="7.5" cy="7" r="3.5" stroke="#b5bfbf" fill="none"/><path d="M1.5 1.5l12 11" stroke="#b5bfbf"/></svg>
<svg style="left:1168px;top:976px" width="12" height="12"><circle cx="6" cy="6" r="6" fill="#5f6466"/></svg>
<span class="t" style="left:1192px;top:974px">14:2</span>
<span class="t" style="left:1228px;top:974px">LF</span>
<span class="t" style="left:1252px;top:974px">UTF-8</span>
<span class="t" style="left:1298px;top:974px">2 spaces</span>
<svg style="left:1360px;top:975px" width="12" height="13"><path d="M1.5 6V3.5a3 3 0 0 1 6 0" stroke="#b5bfbf" stroke-width="1.3" fill="none"/><rect x="4" y="6" width="8" height="7" fill="#b5bfbf"/></svg>
<!--/STRIPS-->
<!-- window borders -->
<div class="a" style="left:0;top:0;width:1px;height:993px;background:#9badac"></div>
<div class="a" style="left:1385px;top:0;width:1px;height:993px;background:#9badac"></div>
<div class="a" style="left:0;top:992px;width:1386px;height:1px;background:#9badac"></div>
<!-- red highlight -->
<div class="a" style="left:367px;top:56px;width:258px;height:32px;border:4px solid #f03434;border-radius:4px"></div>
</body></html>
